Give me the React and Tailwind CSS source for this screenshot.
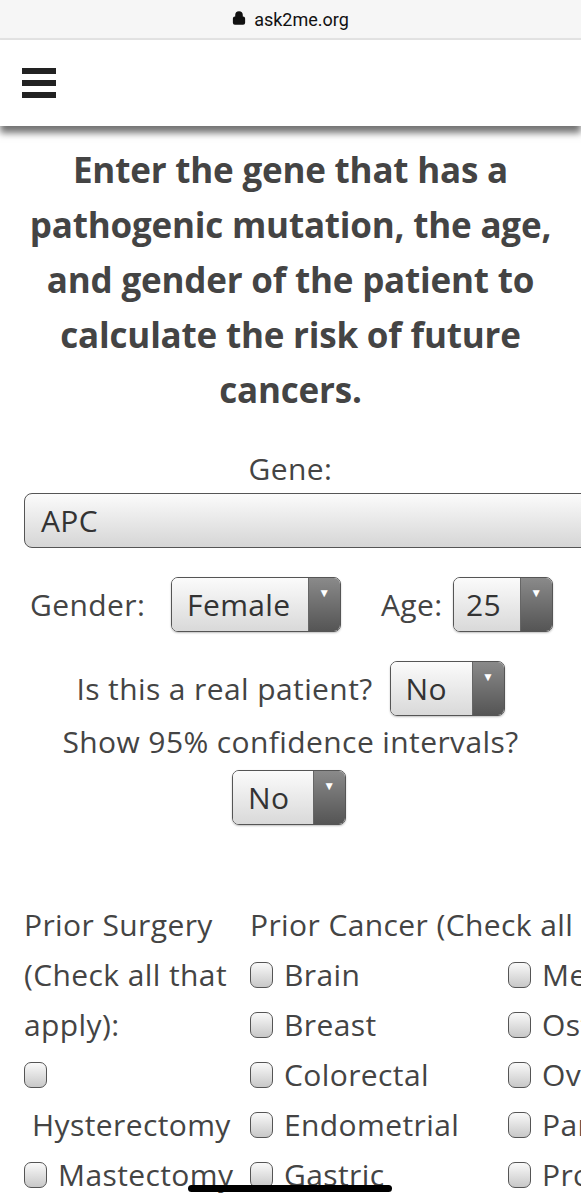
import { Lock } from "lucide-react";

function Select({ value, className = "" }) {
  return (
    <div
      className={`flex h-[55px] shrink-0 overflow-hidden rounded-[7px] border border-[#555] shadow-[0_1px_2px_rgba(0,0,0,0.25)] ${className}`}
    >
      <div className="flex flex-1 items-center bg-gradient-to-b from-[#fbfbfb] to-[#d9d9d9] pl-[15px] text-[30px] text-[#333]">
        {value}
      </div>
      <div className="flex w-[32px] justify-center border-l border-[#666] bg-gradient-to-b from-[#8a8a8a] to-[#555] pt-[9px] text-[12px] leading-none text-white">
        ▼
      </div>
    </div>
  );
}

function Check({ label }) {
  return (
    <div className="flex h-[50px] items-center whitespace-nowrap">
      <span className="mr-[11px] inline-block h-[26px] w-[23px] shrink-0 rounded-[7px] border border-[#555] bg-gradient-to-b from-[#fafafa] to-[#c8c8c8]" />
      {label}
    </div>
  );
}

export default function App() {
  return (
    <div
      className="relative h-[1200px] w-[581px] overflow-hidden bg-white tracking-[0.4px] text-[#444]"
      style={{ fontFamily: '"Open Sans", "Noto Sans", sans-serif' }}
    >
      {/* browser bar */}
      <div className="flex h-[40px] items-center justify-center gap-[8px] border-b-2 border-[#e3e3e3] bg-[#f6f6f6] text-[18px] tracking-normal text-[#111]">
        <Lock size={14} strokeWidth={3} className="mb-[2px] fill-[#111]" />
        <span style={{ fontFamily: '"Roboto", "Liberation Sans", sans-serif' }}>ask2me.org</span>
      </div>

      {/* nav header */}
      <div className="relative z-10 flex h-[86px] items-center bg-white pl-[22px] shadow-[0_7px_7px_rgba(0,0,0,0.55)]">
        <div className="flex flex-col gap-[6px]">
          <span className="block h-[6px] w-[34px] bg-[#222]" />
          <span className="block h-[6px] w-[34px] bg-[#222]" />
          <span className="block h-[6px] w-[34px] bg-[#222]" />
        </div>
      </div>

      <h1 className="mt-[16px] whitespace-nowrap text-center text-[35px] font-bold leading-[55px] tracking-[-0.2px] text-[#444]">
        Enter the gene that has a<br />
        pathogenic mutation, the age,<br />
        and gender of the patient to<br />
        calculate the risk of future<br />
        cancers.
      </h1>

      <div className="mt-[34px] text-center text-[30px] leading-[36px]">Gene:</div>
      <div className="mt-[6px] ml-[24px] flex h-[55px] w-[600px] items-center rounded-[8px] border border-[#555] bg-gradient-to-b from-[#fbfbfb] to-[#d6d6d6] pl-[16px] text-[30px] text-[#333]">
        APC
      </div>

      <div className="mt-[29px] flex items-center text-[30px]">
        <span className="ml-[30px] w-[141px]">Gender:</span>
        <Select value="Female" className="w-[170px]" />
        <span className="ml-[40px] w-[72px]">Age:</span>
        <Select value="25" className="w-[100px] [&>div:first-child]:pl-[12px]" />
      </div>

      <div className="mt-[29px] flex items-center justify-center text-[30px]">
        <span className="mr-[17px]">Is this a real patient?</span>
        <Select value="No" className="w-[115px]" />
      </div>
      <div className="mt-[8px] text-center text-[30px] leading-[36px]">Show 95% confidence intervals?</div>
      <div className="mt-[10px] flex justify-center">
        <Select value="No" className="mr-[3px] w-[114px]" />
      </div>

      <div className="mt-[75px] flex text-[30px] leading-[50px]">
        <div className="ml-[24px] w-[226px] shrink-0">
          <div>Prior Surgery</div>
          <div className="whitespace-nowrap">(Check all that</div>
          <div>apply):</div>
          <div className="flex h-[50px] items-center">
            <span className="inline-block h-[26px] w-[23px] rounded-[7px] border border-[#555] bg-gradient-to-b from-[#fafafa] to-[#c8c8c8]" />
          </div>
          <div className="whitespace-nowrap pl-[8px]">Hysterectomy</div>
          <Check label="Mastectomy" />
        </div>
        <div className="shrink-0">
          <div className="whitespace-nowrap">Prior Cancer (Check all that apply):</div>
          <div className="flex">
            <div className="w-[258px] shrink-0">
              <Check label="Brain" />
              <Check label="Breast" />
              <Check label="Colorectal" />
              <Check label="Endometrial" />
              <Check label="Gastric" />
            </div>
            <div className="shrink-0">
              <Check label="Melanoma" />
              <Check label="Osteosarcoma" />
              <Check label="Ovarian" />
              <Check label="Pancreatic" />
              <Check label="Prostate" />
            </div>
          </div>
        </div>
      </div>

      {/* home indicator */}
      <div className="absolute bottom-[8px] left-[188px] h-[7px] w-[204px] rounded-full bg-black" />
    </div>
  );
}
